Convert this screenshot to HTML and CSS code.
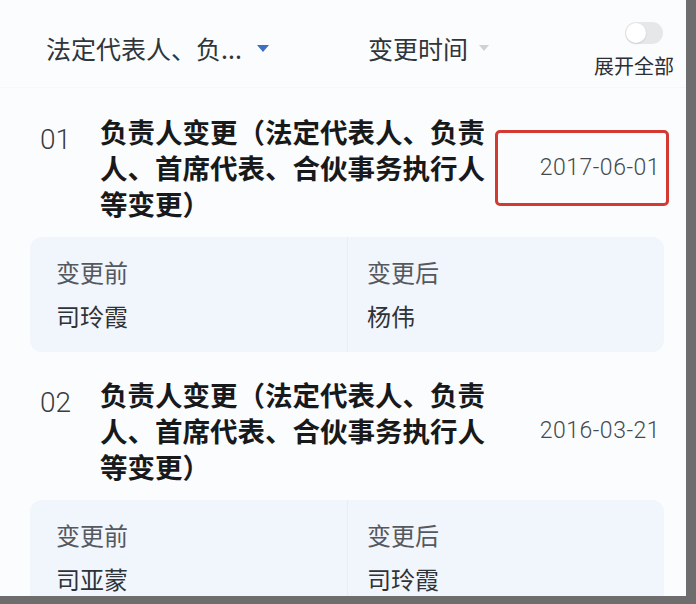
FILE: index.html
```html
<!DOCTYPE html>
<html lang="zh-CN">
<head>
    <meta charset="UTF-8">
    <meta name="viewport" content="width=device-width, initial-scale=1.0">
    <title>变更记录</title>
    <link rel="stylesheet" href="styles.css">
</head>
<body>

<div id="screen">
    <div class="filter-bar">
        <div class="filter filter-type">
            <span>法定代表人、负...</span>
            <span class="arrow arrow-blue"></span>
        </div>
        <div class="filter filter-time">
            <span>变更时间</span>
            <span class="arrow arrow-gray"></span>
        </div>
        <div class="expand">
            <div class="switch"><span class="knob"></span></div>
            <div class="expand-text">展开全部</div>
        </div>
    </div>

    <div class="record">
        <div class="record-head">
            <div class="record-no">01</div>
            <div class="record-title">负责人变更（法定代表人、负责人、首席代表、合伙事务执行人等变更）</div>
            <div class="record-date marked">2017-06-01</div>
        </div>
        <div class="change-box">
            <div class="change-col">
                <div class="change-label">变更前</div>
                <div class="change-value">司玲霞</div>
            </div>
            <div class="change-col">
                <div class="change-label">变更后</div>
                <div class="change-value">杨伟</div>
            </div>
        </div>
    </div>

    <div class="record">
        <div class="record-head">
            <div class="record-no">02</div>
            <div class="record-title">负责人变更（法定代表人、负责人、首席代表、合伙事务执行人等变更）</div>
            <div class="record-date">2016-03-21</div>
        </div>
        <div class="change-box">
            <div class="change-col">
                <div class="change-label">变更前</div>
                <div class="change-value">司亚蒙</div>
            </div>
            <div class="change-col">
                <div class="change-label">变更后</div>
                <div class="change-value">司玲霞</div>
            </div>
        </div>
    </div>
</div>

</body>
</html>
```

FILE: styles.css
```css
body {
    margin: 0;
    padding: 0;
    background-color: #6d6d6d; /* 截图外框 */
    font-family: "Noto Sans CJK SC", "Noto Sans", sans-serif;
}
#screen {
    width: 686px;
    height: 596px;
    background-color: #fbfcfd;
    overflow: hidden;
}

/* 顶部筛选栏 */
.filter-bar {
    display: flex;
    align-items: flex-start;
    height: 88px;
    padding-left: 46px;
    box-sizing: border-box;
    border-bottom: 1px solid #f6f7f9;
}
.filter {
    display: flex;
    align-items: center;
    margin-top: 29px;
    font-size: 25px;
    line-height: 38px;
    color: #30353a;
}
.filter-type {
    width: 322px;
}
.arrow {
    display: inline-block;
    width: 0;
    height: 0;
    border-left: 6px solid transparent;
    border-right: 6px solid transparent;
}
.arrow-blue {
    margin-left: 15px;
    border-top: 7px solid #3d6fc2;
}
.arrow-gray {
    margin-left: 11px;
    border-left-width: 5px;
    border-right-width: 5px;
    border-top: 6px solid #cfd1d4;
}
.expand {
    margin-left: auto;
    margin-right: 12px;
    display: flex;
    flex-direction: column;
    align-items: center;
    padding-top: 22px;
}
.switch {
    width: 38px;
    height: 22px;
    border-radius: 11px;
    background-color: #e6e7e9;
    position: relative;
    margin-left: 20px;
}
.knob {
    position: absolute;
    left: 1px;
    top: 1px;
    width: 20px;
    height: 20px;
    border-radius: 50%;
    background-color: #fff;
    box-shadow: 0 1px 2px rgba(0, 0, 0, 0.12);
}
.expand-text {
    margin-top: 10px;
    font-size: 20px;
    line-height: 24px;
    color: #2c2f33;
}

/* 记录 */
.record {
    padding: 25px 22px 0 30px;
}
.record + .record {
    padding-top: 24px;
}
.record-head {
    display: flex;
    align-items: center;
}
.record-no {
    align-self: flex-start;
    width: 70px;
    padding-left: 10px;
    box-sizing: border-box;
    margin-top: 9px;
    font-family: Roboto, "Noto Sans", sans-serif;
    font-weight: 300;
    font-size: 28px;
    line-height: 36px;
    color: #3a3d40;
}
.record-title {
    width: 395px;
    font-size: 27.5px;
    line-height: 36px;
    font-weight: bold;
    color: #17191b;
}
.record-date {
    margin-left: auto;
    margin-right: 4px;
    position: relative;
    font-family: Roboto, "Noto Sans", sans-serif;
    font-weight: 300;
    font-size: 23px;
    letter-spacing: 0.5px;
    color: #45494e;
}
.record-date.marked::after {
    content: "";
    position: absolute;
    left: -45px;
    right: -9px;
    top: -24px;
    bottom: -25px;
    border: 3px solid #d33a32;
    border-radius: 5px;
}

/* 变更前后 */
.change-box {
    display: grid;
    grid-template-columns: 1fr 1fr;
    margin-top: 16px;
    background-color: #f1f5fc;
    border-radius: 12px;
}
.change-col {
    padding: 21px 26px 22px;
}
.change-col + .change-col {
    border-left: 1px solid #e9eef6;
    padding-left: 19px;
}
.change-label {
    font-size: 24px;
    line-height: 28px;
    color: #55595f;
}
.change-value {
    margin-top: 16px;
    font-size: 24px;
    line-height: 28px;
    color: #2e3338;
}
```
